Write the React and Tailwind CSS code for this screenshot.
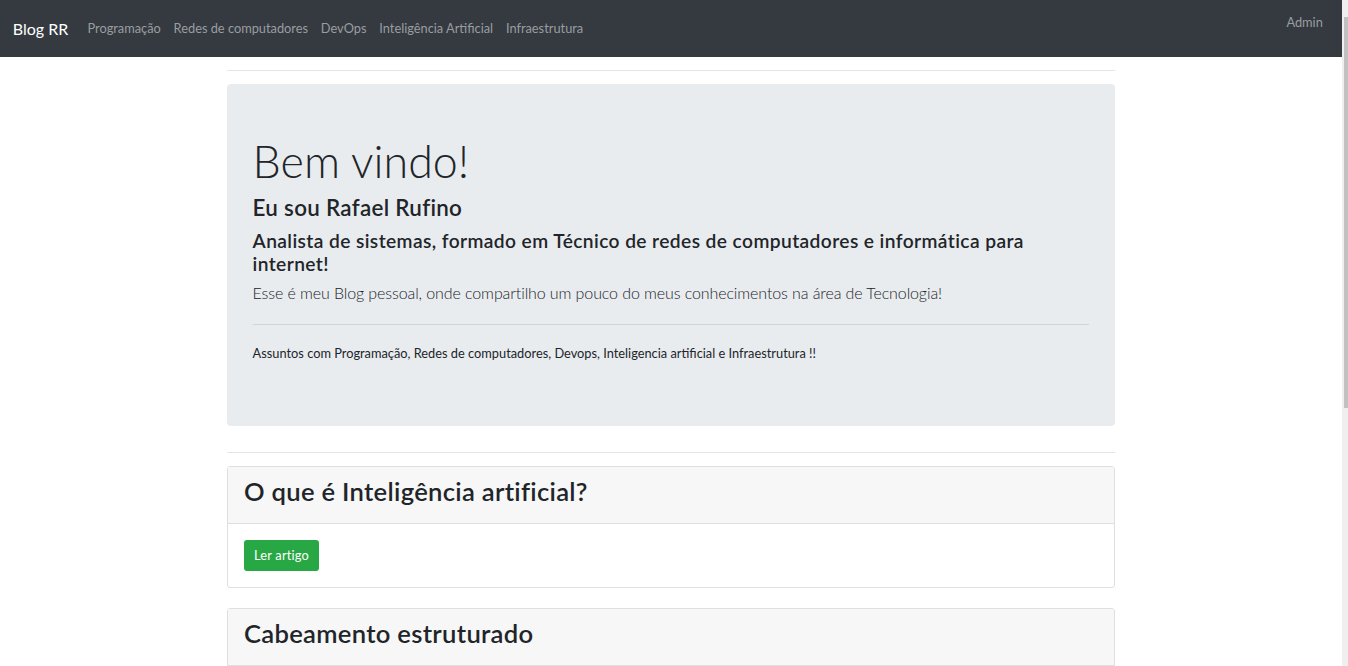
import React from 'react'

const links = ['Programação', 'Redes de computadores', 'DevOps', 'Inteligência Artificial', 'Infraestrutura']

const posts = [
  'O que é Inteligência artificial?',
  'Cabeamento estruturado',
  'Docker para iniciantes',
]

const Navbar = () => (
  <nav className='flex h-[57px] items-center bg-[#343a40] px-[12.8px]'>
    <a href='#' className='mr-[12.8px] text-[16px] leading-[24px] text-white'>
      Blog RR
    </a>
    <ul className='flex items-center'>
      {links.map((link) => (
        <li key={link}>
          <a href='#' className='block px-[6.4px] py-[6.4px] text-[12.8px] leading-[19.2px] text-[#9a9da0]'>
            {link}
          </a>
        </li>
      ))}
    </ul>
    <a
      href='#'
      className='ml-auto mt-[6.4px] self-start px-[6.4px] py-[6.4px] text-[12.8px] leading-[19.2px] text-[#9a9da0]'
    >
      Admin
    </a>
  </nav>
)

const PostCard = ({ title }) => (
  <div className='mb-[20px] rounded-[3px] border border-[#dfdfdf] bg-white'>
    <div className='border-b border-[#dfdfdf] bg-[#f7f7f7] px-[16px] pt-[9.6px] pb-[9.6px]'>
      <h2 className='mb-[6.4px] text-[25.6px] font-semibold leading-[30.72px] tracking-[0.3px]'>{title}</h2>
    </div>
    <div className='p-[16px]'>
      <button
        type='button'
        className='rounded-[3px] bg-[#28a745] px-[10px] py-[5.6px] text-[12.8px] leading-[19.2px] tracking-[0.2px] text-white'
      >
        Ler artigo
      </button>
    </div>
  </div>
)

export default function App() {
  return (
    <div className="flex h-screen overflow-hidden bg-white font-['Lato',sans-serif] text-[#212529]">
      <div className='min-w-0 flex-1 overflow-hidden'>
        <Navbar />

        <main className='mx-auto w-[888px]'>
          <div className='mt-[13px] h-px bg-[#e5e5e5]' />

          <section className='mt-[13px] rounded-[4px] bg-[#e9ecef] px-[25.6px] pt-[51.2px] pb-[50px]'>
            <h1 className='mb-[6.4px] text-[44.8px] font-light leading-[53.76px]'>Bem vindo!</h1>
            <h3 className='mb-[6.4px] text-[22.4px] font-semibold leading-[26.88px] tracking-[0.3px]'>
              Eu sou Rafael Rufino
            </h3>
            <h4 className='mb-[6.4px] text-[19.2px] font-semibold leading-[23.04px] tracking-[0.4px]'>
              Analista de sistemas, formado em Técnico de redes de computadores e informática para internet!
            </h4>
            <p className='text-[16px] font-light leading-[24px] tracking-[-0.1px]'>
              Esse é meu Blog pessoal, onde compartilho um pouco do meus conhecimentos na área de Tecnologia!
            </p>
            <div className='my-[19.2px] h-px bg-[#d2d4d7]' />
            <p className='mb-[12.8px] text-[12.8px] leading-[19.2px]'>
              Assuntos com Programação, Redes de computadores, Devops, Inteligencia artificial e Infraestrutura !!
            </p>
          </section>

          <div className='mt-[25.6px] mb-[12.8px] h-px bg-[#e5e5e5]' />

          {posts.map((title) => (
            <PostCard key={title} title={title} />
          ))}
        </main>
      </div>

      <div className='w-[6px] shrink-0 bg-[#efefef]'>
        <div className='mt-[17px] ml-[2px] h-[391px] w-[4px] bg-[#c1c1c1]' />
      </div>
    </div>
  )
}
